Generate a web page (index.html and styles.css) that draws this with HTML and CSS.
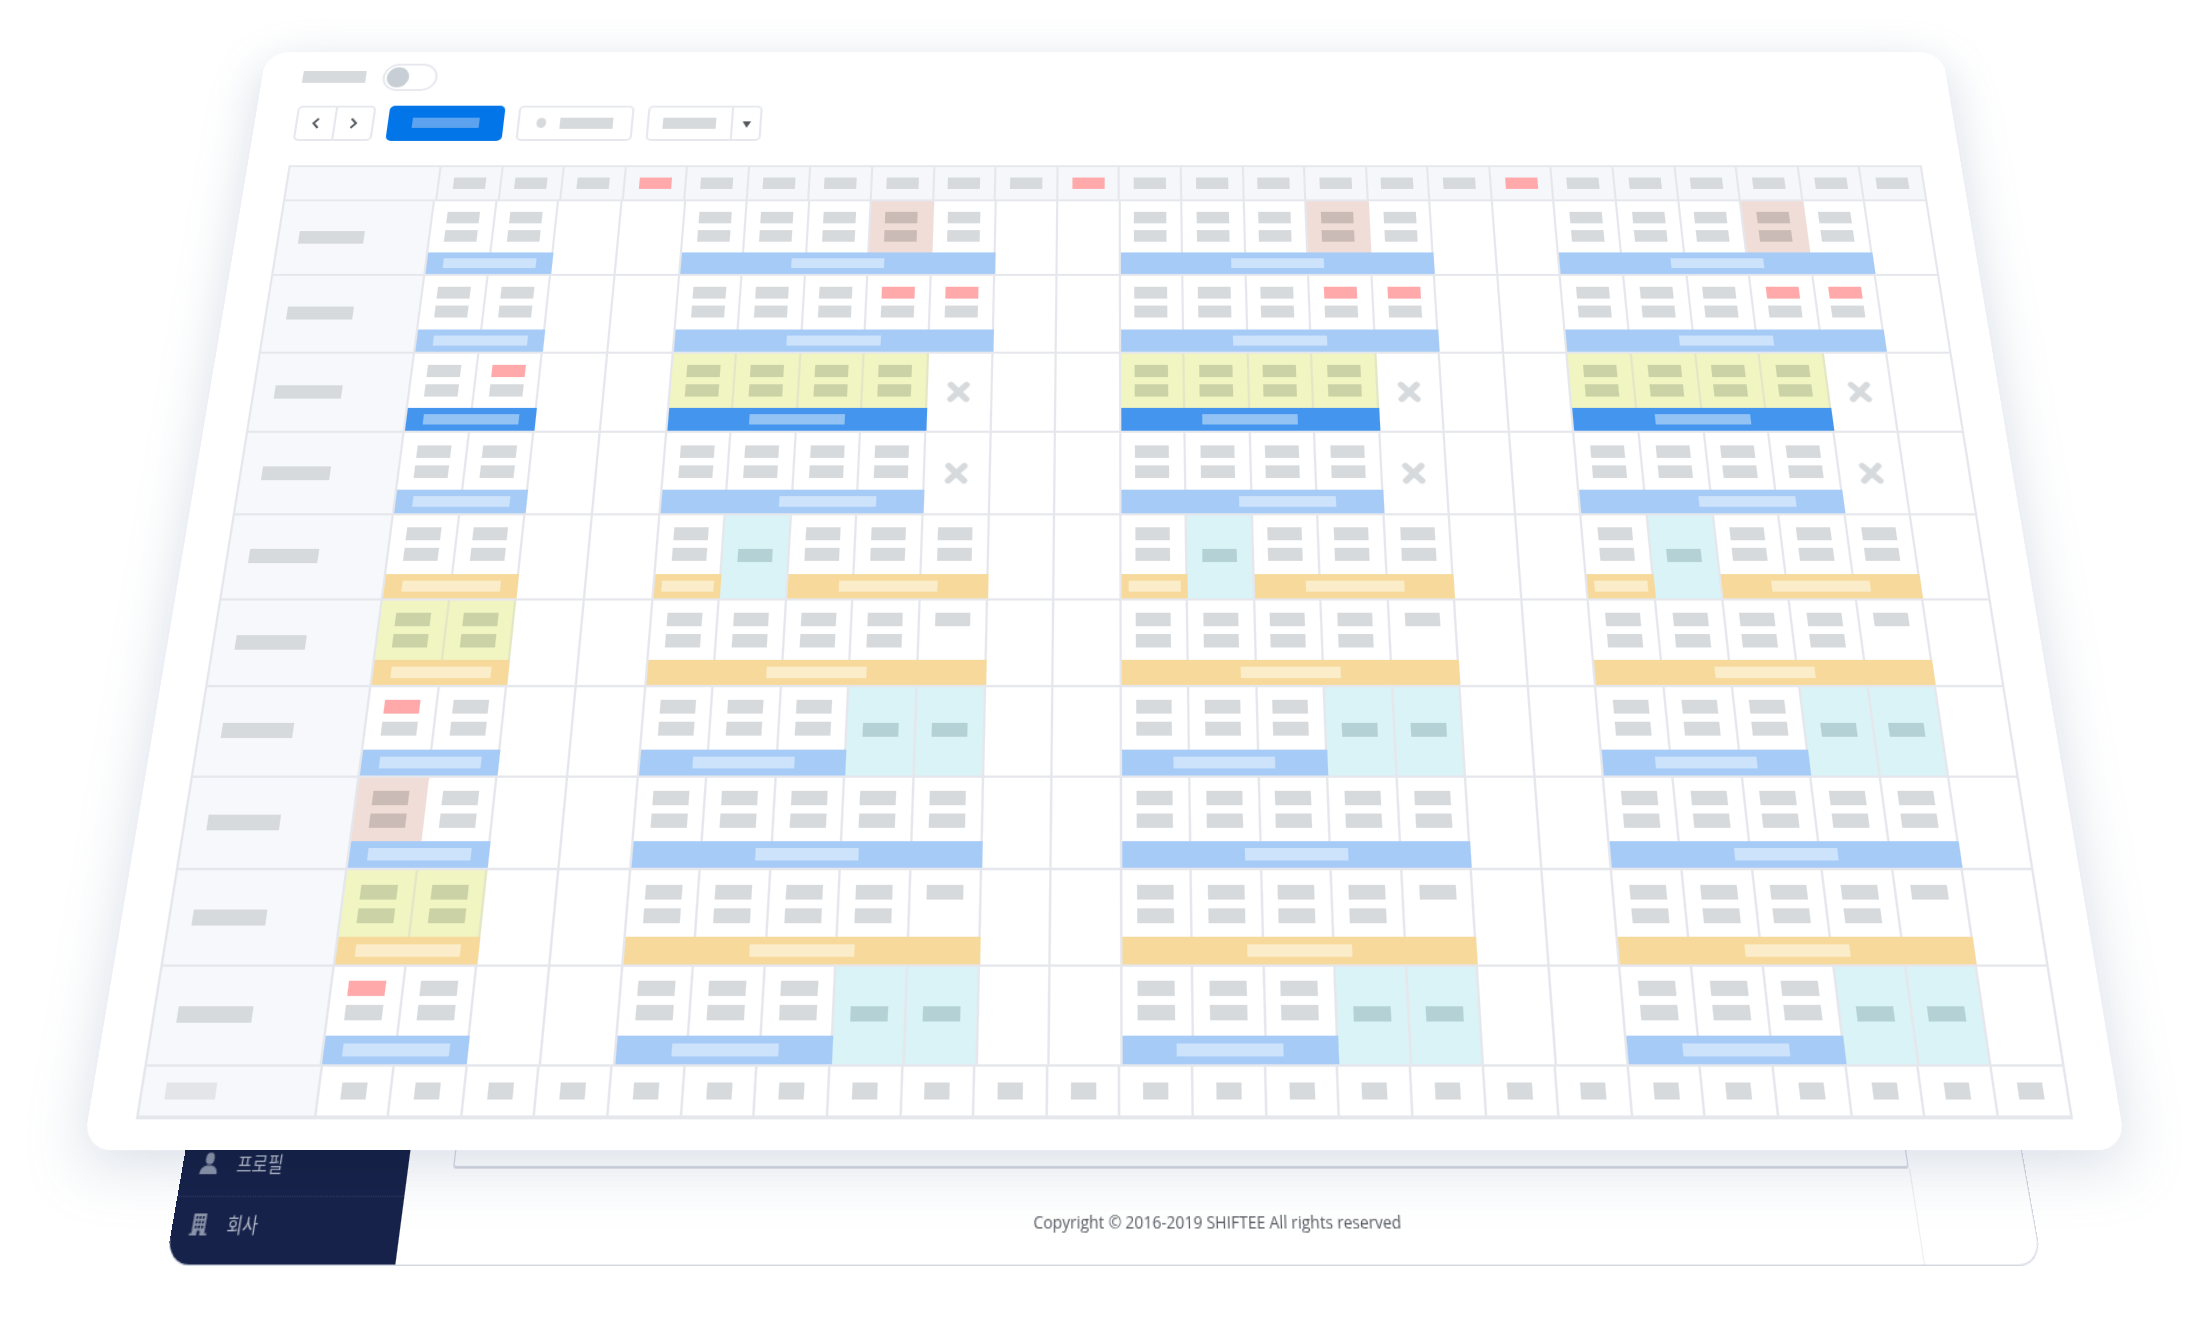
FILE: index.html
```html
<!DOCTYPE html>
<html lang="ko">
<head>
<meta charset="utf-8">
<title>SHIFTEE</title>
<link rel="stylesheet" href="styles.css">
</head>
<body>
<div class="stage">

    <!-- page behind the card, only the bottom strip shows -->
    <div class="sheet">
        <div class="side">
            <div class="menu">
                <svg class="menu-icon" viewBox="0 0 16 16"><ellipse cx="8" cy="4.4" rx="3.7" ry="4.3"/><path d="M.5 16C.5 11.2 4 9.6 8 9.6s7.5 1.6 7.5 6.4z"/></svg>
                <span>프로필</span>
            </div>
            <div class="menu">
                <svg class="menu-icon" viewBox="0 0 16 16"><path d="M2.5 0h11v14.500h2V16H.5v-1.500h2z"/><path class="win" d="M4.500 2h1.800v1.800H4.500zM7.200 2H9v1.800H7.200zM9.900 2h1.800v1.800H9.900zM4.500 5.500h1.800v1.800H4.500zM7.200 5.500H9v1.800H7.200zM9.900 5.500h1.800v1.800H9.900zM4.500 9h1.800v1.800H4.500zM7.200 9H9v1.800H7.200zM9.900 9h1.800v1.800H9.900zM6.800 12.500h2.600V16H6.800z"/></svg>
                <span>회사</span>
            </div>
        </div>
        <div class="page">
            <div class="page-box"></div>
            <div class="copyright">Copyright © 2016-2019 SHIFTEE All rights reserved</div>
        </div>
    </div>

    <!-- card plate: shadow and white sheet, content sits on top -->
    <div class="plate shade"></div>
    <div class="plate"></div>

    <!-- the schedule card -->
    <div class="card">
        <div class="toggle-row">
            <i class="ph wide"></i>
            <div class="toggle"><b></b></div>
        </div>
        <div class="tools">
            <div class="btn nav">
                <span><svg viewBox="0 0 10 14"><path d="M7.500 2L3 7l4.500 5"/></svg></span>
                <span><svg viewBox="0 0 10 14"><path d="M2.500 2L7 7l-4.500 5"/></svg></span>
            </div>
            <div class="btn primary"><i></i></div>
            <div class="btn plain"><b></b><i class="ph mid"></i></div>
            <div class="btn select"><span class="select-text"><i class="ph mid"></i></span><span class="caret"><b></b></span></div>
        </div>

        <div class="table">
            <div class="row head">
                <div class="name"></div>
                <div class="date"><i class="ph"></i></div><div class="date"><i class="ph"></i></div><div class="date"><i class="ph"></i></div><div class="date"><i class="ph red"></i></div>
                <div class="date"><i class="ph"></i></div><div class="date"><i class="ph"></i></div><div class="date"><i class="ph"></i></div><div class="date"><i class="ph"></i></div>
                <div class="date"><i class="ph"></i></div><div class="date"><i class="ph"></i></div><div class="date"><i class="ph red"></i></div><div class="date"><i class="ph"></i></div>
                <div class="date"><i class="ph"></i></div><div class="date"><i class="ph"></i></div><div class="date"><i class="ph"></i></div><div class="date"><i class="ph"></i></div>
                <div class="date"><i class="ph"></i></div><div class="date"><i class="ph red"></i></div><div class="date"><i class="ph"></i></div><div class="date"><i class="ph"></i></div>
                <div class="date"><i class="ph"></i></div><div class="date"><i class="ph"></i></div><div class="date"><i class="ph"></i></div><div class="date"><i class="ph"></i></div>
            </div>

            <!-- row 1 -->
            <div class="row">
                <div class="name"><i class="ph wide"></i></div>
                <div class="shift span-2"><div class="days"><div class="day"><i class="ph"></i><i class="ph"></i></div><div class="day"><i class="ph"></i><i class="ph"></i></div></div><div class="bar"><i></i></div></div>
                <div class="off"></div><div class="off"></div>
                <div class="shift span-5"><div class="days"><div class="day"><i class="ph"></i><i class="ph"></i></div><div class="day"><i class="ph"></i><i class="ph"></i></div><div class="day"><i class="ph"></i><i class="ph"></i></div><div class="day pink"><i class="ph"></i><i class="ph"></i></div><div class="day"><i class="ph"></i><i class="ph"></i></div></div><div class="bar"><i></i></div></div>
                <div class="off"></div><div class="off"></div>
                <div class="shift span-5"><div class="days"><div class="day"><i class="ph"></i><i class="ph"></i></div><div class="day"><i class="ph"></i><i class="ph"></i></div><div class="day"><i class="ph"></i><i class="ph"></i></div><div class="day pink"><i class="ph"></i><i class="ph"></i></div><div class="day"><i class="ph"></i><i class="ph"></i></div></div><div class="bar"><i></i></div></div>
                <div class="off"></div><div class="off"></div>
                <div class="shift span-5"><div class="days"><div class="day"><i class="ph"></i><i class="ph"></i></div><div class="day"><i class="ph"></i><i class="ph"></i></div><div class="day"><i class="ph"></i><i class="ph"></i></div><div class="day pink"><i class="ph"></i><i class="ph"></i></div><div class="day"><i class="ph"></i><i class="ph"></i></div></div><div class="bar"><i></i></div></div>
                <div class="off"></div>
            </div>

            <!-- row 2 -->
            <div class="row">
                <div class="name"><i class="ph wide"></i></div>
                <div class="shift span-2"><div class="days"><div class="day"><i class="ph"></i><i class="ph"></i></div><div class="day"><i class="ph"></i><i class="ph"></i></div></div><div class="bar"><i></i></div></div>
                <div class="off"></div><div class="off"></div>
                <div class="shift span-5"><div class="days"><div class="day"><i class="ph"></i><i class="ph"></i></div><div class="day"><i class="ph"></i><i class="ph"></i></div><div class="day"><i class="ph"></i><i class="ph"></i></div><div class="day"><i class="ph red"></i><i class="ph"></i></div><div class="day"><i class="ph red"></i><i class="ph"></i></div></div><div class="bar"><i></i></div></div>
                <div class="off"></div><div class="off"></div>
                <div class="shift span-5"><div class="days"><div class="day"><i class="ph"></i><i class="ph"></i></div><div class="day"><i class="ph"></i><i class="ph"></i></div><div class="day"><i class="ph"></i><i class="ph"></i></div><div class="day"><i class="ph red"></i><i class="ph"></i></div><div class="day"><i class="ph red"></i><i class="ph"></i></div></div><div class="bar"><i></i></div></div>
                <div class="off"></div><div class="off"></div>
                <div class="shift span-5"><div class="days"><div class="day"><i class="ph"></i><i class="ph"></i></div><div class="day"><i class="ph"></i><i class="ph"></i></div><div class="day"><i class="ph"></i><i class="ph"></i></div><div class="day"><i class="ph red"></i><i class="ph"></i></div><div class="day"><i class="ph red"></i><i class="ph"></i></div></div><div class="bar"><i></i></div></div>
                <div class="off"></div>
            </div>

            <!-- row 3 -->
            <div class="row">
                <div class="name"><i class="ph wide"></i></div>
                <div class="shift span-2"><div class="days"><div class="day"><i class="ph"></i><i class="ph"></i></div><div class="day"><i class="ph red"></i><i class="ph"></i></div></div><div class="bar dark"><i></i></div></div>
                <div class="off"></div><div class="off"></div>
                <div class="shift span-4"><div class="days"><div class="day yellow"><i class="ph"></i><i class="ph"></i></div><div class="day yellow"><i class="ph"></i><i class="ph"></i></div><div class="day yellow"><i class="ph"></i><i class="ph"></i></div><div class="day yellow"><i class="ph"></i><i class="ph"></i></div></div><div class="bar dark"><i></i></div></div>
                <div class="off"><svg class="cross" viewBox="0 0 18 18"><path d="M3 3l12 12M15 3L3 15"/></svg></div>
                <div class="off"></div><div class="off"></div>
                <div class="shift span-4"><div class="days"><div class="day yellow"><i class="ph"></i><i class="ph"></i></div><div class="day yellow"><i class="ph"></i><i class="ph"></i></div><div class="day yellow"><i class="ph"></i><i class="ph"></i></div><div class="day yellow"><i class="ph"></i><i class="ph"></i></div></div><div class="bar dark"><i></i></div></div>
                <div class="off"><svg class="cross" viewBox="0 0 18 18"><path d="M3 3l12 12M15 3L3 15"/></svg></div>
                <div class="off"></div><div class="off"></div>
                <div class="shift span-4"><div class="days"><div class="day yellow"><i class="ph"></i><i class="ph"></i></div><div class="day yellow"><i class="ph"></i><i class="ph"></i></div><div class="day yellow"><i class="ph"></i><i class="ph"></i></div><div class="day yellow"><i class="ph"></i><i class="ph"></i></div></div><div class="bar dark"><i></i></div></div>
                <div class="off"><svg class="cross" viewBox="0 0 18 18"><path d="M3 3l12 12M15 3L3 15"/></svg></div>
                <div class="off"></div>
            </div>

            <!-- row 4 -->
            <div class="row">
                <div class="name"><i class="ph wide"></i></div>
                <div class="shift span-2"><div class="days"><div class="day"><i class="ph"></i><i class="ph"></i></div><div class="day"><i class="ph"></i><i class="ph"></i></div></div><div class="bar"><i></i></div></div>
                <div class="off"></div><div class="off"></div>
                <div class="shift span-4"><div class="days"><div class="day"><i class="ph"></i><i class="ph"></i></div><div class="day"><i class="ph"></i><i class="ph"></i></div><div class="day"><i class="ph"></i><i class="ph"></i></div><div class="day"><i class="ph"></i><i class="ph"></i></div></div><div class="bar nudge"><i></i></div></div>
                <div class="off"><svg class="cross" viewBox="0 0 18 18"><path d="M3 3l12 12M15 3L3 15"/></svg></div>
                <div class="off"></div><div class="off"></div>
                <div class="shift span-4"><div class="days"><div class="day"><i class="ph"></i><i class="ph"></i></div><div class="day"><i class="ph"></i><i class="ph"></i></div><div class="day"><i class="ph"></i><i class="ph"></i></div><div class="day"><i class="ph"></i><i class="ph"></i></div></div><div class="bar nudge"><i></i></div></div>
                <div class="off"><svg class="cross" viewBox="0 0 18 18"><path d="M3 3l12 12M15 3L3 15"/></svg></div>
                <div class="off"></div><div class="off"></div>
                <div class="shift span-4"><div class="days"><div class="day"><i class="ph"></i><i class="ph"></i></div><div class="day"><i class="ph"></i><i class="ph"></i></div><div class="day"><i class="ph"></i><i class="ph"></i></div><div class="day"><i class="ph"></i><i class="ph"></i></div></div><div class="bar nudge"><i></i></div></div>
                <div class="off"><svg class="cross" viewBox="0 0 18 18"><path d="M3 3l12 12M15 3L3 15"/></svg></div>
                <div class="off"></div>
            </div>

            <!-- row 5 -->
            <div class="row">
                <div class="name"><i class="ph wide"></i></div>
                <div class="shift span-2"><div class="days"><div class="day"><i class="ph"></i><i class="ph"></i></div><div class="day"><i class="ph"></i><i class="ph"></i></div></div><div class="bar orange"><i></i></div></div>
                <div class="off"></div><div class="off"></div>
                <div class="shift span-1"><div class="days"><div class="day"><i class="ph"></i><i class="ph"></i></div></div><div class="bar orange"><i></i></div></div>
                <div class="rest"><i class="ph"></i></div>
                <div class="shift span-3"><div class="days"><div class="day"><i class="ph"></i><i class="ph"></i></div><div class="day"><i class="ph"></i><i class="ph"></i></div><div class="day"><i class="ph"></i><i class="ph"></i></div></div><div class="bar orange"><i></i></div></div>
                <div class="off"></div><div class="off"></div>
                <div class="shift span-1"><div class="days"><div class="day"><i class="ph"></i><i class="ph"></i></div></div><div class="bar orange"><i></i></div></div>
                <div class="rest"><i class="ph"></i></div>
                <div class="shift span-3"><div class="days"><div class="day"><i class="ph"></i><i class="ph"></i></div><div class="day"><i class="ph"></i><i class="ph"></i></div><div class="day"><i class="ph"></i><i class="ph"></i></div></div><div class="bar orange"><i></i></div></div>
                <div class="off"></div><div class="off"></div>
                <div class="shift span-1"><div class="days"><div class="day"><i class="ph"></i><i class="ph"></i></div></div><div class="bar orange"><i></i></div></div>
                <div class="rest"><i class="ph"></i></div>
                <div class="shift span-3"><div class="days"><div class="day"><i class="ph"></i><i class="ph"></i></div><div class="day"><i class="ph"></i><i class="ph"></i></div><div class="day"><i class="ph"></i><i class="ph"></i></div></div><div class="bar orange"><i></i></div></div>
                <div class="off"></div>
            </div>

            <!-- row 6 -->
            <div class="row">
                <div class="name"><i class="ph wide"></i></div>
                <div class="shift span-2"><div class="days"><div class="day yellow"><i class="ph"></i><i class="ph"></i></div><div class="day yellow"><i class="ph"></i><i class="ph"></i></div></div><div class="bar orange"><i></i></div></div>
                <div class="off"></div><div class="off"></div>
                <div class="shift span-5"><div class="days"><div class="day"><i class="ph"></i><i class="ph"></i></div><div class="day"><i class="ph"></i><i class="ph"></i></div><div class="day"><i class="ph"></i><i class="ph"></i></div><div class="day"><i class="ph"></i><i class="ph"></i></div><div class="day one"><i class="ph"></i></div></div><div class="bar orange"><i></i></div></div>
                <div class="off"></div><div class="off"></div>
                <div class="shift span-5"><div class="days"><div class="day"><i class="ph"></i><i class="ph"></i></div><div class="day"><i class="ph"></i><i class="ph"></i></div><div class="day"><i class="ph"></i><i class="ph"></i></div><div class="day"><i class="ph"></i><i class="ph"></i></div><div class="day one"><i class="ph"></i></div></div><div class="bar orange"><i></i></div></div>
                <div class="off"></div><div class="off"></div>
                <div class="shift span-5"><div class="days"><div class="day"><i class="ph"></i><i class="ph"></i></div><div class="day"><i class="ph"></i><i class="ph"></i></div><div class="day"><i class="ph"></i><i class="ph"></i></div><div class="day"><i class="ph"></i><i class="ph"></i></div><div class="day one"><i class="ph"></i></div></div><div class="bar orange"><i></i></div></div>
                <div class="off"></div>
            </div>

            <!-- row 7 -->
            <div class="row">
                <div class="name"><i class="ph wide"></i></div>
                <div class="shift span-2"><div class="days"><div class="day"><i class="ph red"></i><i class="ph"></i></div><div class="day"><i class="ph"></i><i class="ph"></i></div></div><div class="bar"><i></i></div></div>
                <div class="off"></div><div class="off"></div>
                <div class="shift span-3"><div class="days"><div class="day"><i class="ph"></i><i class="ph"></i></div><div class="day"><i class="ph"></i><i class="ph"></i></div><div class="day"><i class="ph"></i><i class="ph"></i></div></div><div class="bar"><i></i></div></div>
                <div class="rest"><i class="ph"></i></div><div class="rest"><i class="ph"></i></div>
                <div class="off"></div><div class="off"></div>
                <div class="shift span-3"><div class="days"><div class="day"><i class="ph"></i><i class="ph"></i></div><div class="day"><i class="ph"></i><i class="ph"></i></div><div class="day"><i class="ph"></i><i class="ph"></i></div></div><div class="bar"><i></i></div></div>
                <div class="rest"><i class="ph"></i></div><div class="rest"><i class="ph"></i></div>
                <div class="off"></div><div class="off"></div>
                <div class="shift span-3"><div class="days"><div class="day"><i class="ph"></i><i class="ph"></i></div><div class="day"><i class="ph"></i><i class="ph"></i></div><div class="day"><i class="ph"></i><i class="ph"></i></div></div><div class="bar"><i></i></div></div>
                <div class="rest"><i class="ph"></i></div><div class="rest"><i class="ph"></i></div>
                <div class="off"></div>
            </div>

            <!-- row 8 -->
            <div class="row">
                <div class="name"><i class="ph wide"></i></div>
                <div class="shift span-2"><div class="days"><div class="day pink"><i class="ph"></i><i class="ph"></i></div><div class="day"><i class="ph"></i><i class="ph"></i></div></div><div class="bar"><i></i></div></div>
                <div class="off"></div><div class="off"></div>
                <div class="shift span-5"><div class="days"><div class="day"><i class="ph"></i><i class="ph"></i></div><div class="day"><i class="ph"></i><i class="ph"></i></div><div class="day"><i class="ph"></i><i class="ph"></i></div><div class="day"><i class="ph"></i><i class="ph"></i></div><div class="day"><i class="ph"></i><i class="ph"></i></div></div><div class="bar"><i></i></div></div>
                <div class="off"></div><div class="off"></div>
                <div class="shift span-5"><div class="days"><div class="day"><i class="ph"></i><i class="ph"></i></div><div class="day"><i class="ph"></i><i class="ph"></i></div><div class="day"><i class="ph"></i><i class="ph"></i></div><div class="day"><i class="ph"></i><i class="ph"></i></div><div class="day"><i class="ph"></i><i class="ph"></i></div></div><div class="bar"><i></i></div></div>
                <div class="off"></div><div class="off"></div>
                <div class="shift span-5"><div class="days"><div class="day"><i class="ph"></i><i class="ph"></i></div><div class="day"><i class="ph"></i><i class="ph"></i></div><div class="day"><i class="ph"></i><i class="ph"></i></div><div class="day"><i class="ph"></i><i class="ph"></i></div><div class="day"><i class="ph"></i><i class="ph"></i></div></div><div class="bar"><i></i></div></div>
                <div class="off"></div>
            </div>

            <!-- row 9 -->
            <div class="row">
                <div class="name"><i class="ph wide"></i></div>
                <div class="shift span-2"><div class="days"><div class="day yellow"><i class="ph"></i><i class="ph"></i></div><div class="day yellow"><i class="ph"></i><i class="ph"></i></div></div><div class="bar orange"><i></i></div></div>
                <div class="off"></div><div class="off"></div>
                <div class="shift span-5"><div class="days"><div class="day"><i class="ph"></i><i class="ph"></i></div><div class="day"><i class="ph"></i><i class="ph"></i></div><div class="day"><i class="ph"></i><i class="ph"></i></div><div class="day"><i class="ph"></i><i class="ph"></i></div><div class="day one"><i class="ph"></i></div></div><div class="bar orange"><i></i></div></div>
                <div class="off"></div><div class="off"></div>
                <div class="shift span-5"><div class="days"><div class="day"><i class="ph"></i><i class="ph"></i></div><div class="day"><i class="ph"></i><i class="ph"></i></div><div class="day"><i class="ph"></i><i class="ph"></i></div><div class="day"><i class="ph"></i><i class="ph"></i></div><div class="day one"><i class="ph"></i></div></div><div class="bar orange"><i></i></div></div>
                <div class="off"></div><div class="off"></div>
                <div class="shift span-5"><div class="days"><div class="day"><i class="ph"></i><i class="ph"></i></div><div class="day"><i class="ph"></i><i class="ph"></i></div><div class="day"><i class="ph"></i><i class="ph"></i></div><div class="day"><i class="ph"></i><i class="ph"></i></div><div class="day one"><i class="ph"></i></div></div><div class="bar orange"><i></i></div></div>
                <div class="off"></div>
            </div>

            <!-- row 10 -->
            <div class="row">
                <div class="name"><i class="ph wide"></i></div>
                <div class="shift span-2"><div class="days"><div class="day"><i class="ph red"></i><i class="ph"></i></div><div class="day"><i class="ph"></i><i class="ph"></i></div></div><div class="bar"><i></i></div></div>
                <div class="off"></div><div class="off"></div>
                <div class="shift span-3"><div class="days"><div class="day"><i class="ph"></i><i class="ph"></i></div><div class="day"><i class="ph"></i><i class="ph"></i></div><div class="day"><i class="ph"></i><i class="ph"></i></div></div><div class="bar"><i></i></div></div>
                <div class="rest"><i class="ph"></i></div><div class="rest"><i class="ph"></i></div>
                <div class="off"></div><div class="off"></div>
                <div class="shift span-3"><div class="days"><div class="day"><i class="ph"></i><i class="ph"></i></div><div class="day"><i class="ph"></i><i class="ph"></i></div><div class="day"><i class="ph"></i><i class="ph"></i></div></div><div class="bar"><i></i></div></div>
                <div class="rest"><i class="ph"></i></div><div class="rest"><i class="ph"></i></div>
                <div class="off"></div><div class="off"></div>
                <div class="shift span-3"><div class="days"><div class="day"><i class="ph"></i><i class="ph"></i></div><div class="day"><i class="ph"></i><i class="ph"></i></div><div class="day"><i class="ph"></i><i class="ph"></i></div></div><div class="bar"><i></i></div></div>
                <div class="rest"><i class="ph"></i></div><div class="rest"><i class="ph"></i></div>
                <div class="off"></div>
            </div>

            <!-- totals -->
            <div class="row foot">
                <div class="name"><i class="ph total"></i></div>
                <div class="sum"><i class="ph"></i></div><div class="sum"><i class="ph"></i></div><div class="sum"><i class="ph"></i></div><div class="sum"><i class="ph"></i></div>
                <div class="sum"><i class="ph"></i></div><div class="sum"><i class="ph"></i></div><div class="sum"><i class="ph"></i></div><div class="sum"><i class="ph"></i></div>
                <div class="sum"><i class="ph"></i></div><div class="sum"><i class="ph"></i></div><div class="sum"><i class="ph"></i></div><div class="sum"><i class="ph"></i></div>
                <div class="sum"><i class="ph"></i></div><div class="sum"><i class="ph"></i></div><div class="sum"><i class="ph"></i></div><div class="sum"><i class="ph"></i></div>
                <div class="sum"><i class="ph"></i></div><div class="sum"><i class="ph"></i></div><div class="sum"><i class="ph"></i></div><div class="sum"><i class="ph"></i></div>
                <div class="sum"><i class="ph"></i></div><div class="sum"><i class="ph"></i></div><div class="sum"><i class="ph"></i></div><div class="sum"><i class="ph"></i></div>
            </div>
        </div>
    </div>
</div>
</body>
</html>
```

FILE: styles.css
```css
html, body {
    margin: 0;
    padding: 0;
    background: #fff;
}
.stage {
    position: relative;
    width: 2208px;
    height: 1320px;
    overflow: hidden;
}

/* page behind the card */
.sheet {
    position: absolute;
    left: 0;
    top: 0;
    width: 1600px;
    height: 100px;
    display: flex;
    box-sizing: border-box;
    background: #fff;
    border: solid #d3d7e0;
    border-width: 0 1px 1px 0;
    border-radius: 0 0 20px 20px;
    transform-origin: 0 0;
    transform: matrix3d(1.14338,0,0,0, -.2802,1.036,0,-.0002557, 0,0,1,0, 189,1130,0,1);
}
.side {
    width: 196px;
    flex: none;
    box-sizing: border-box;
    padding-bottom: 5.4px;
    display: flex;
    flex-direction: column;
    justify-content: flex-end;
    background: #16224a;
    border-radius: 0 0 0 20px;
}
.menu {
    height: 44.5px;
    flex: none;
    display: flex;
    align-items: center;
    gap: 16px;
    padding: 0 0 4px 15px;
    box-sizing: border-box;
    color: #b4bac9;
    font: 14.5px "Noto Sans CJK KR", "Noto Sans", sans-serif;
}
.menu + .menu {
    border-top: 1px dotted #2c3860;
}
.menu-icon {
    width: 16px;
    height: 16px;
    flex: none;
    fill: #8b94a9;
}
.menu-icon .win {
    fill: #16224a;
}
.page {
    flex: 1;
    position: relative;
    display: flex;
    flex-direction: column;
}
.page-box {
    width: 1264px;
    height: 29px;
    margin-left: 38.5px;
    box-sizing: border-box;
    border: solid #d3d7e0;
    border-width: 0 1px 2px 1px;
    border-radius: 0 0 3px 3px;
    flex: none;
}
.page::after {
    content: "";
    position: absolute;
    left: 1302.5px;
    top: 29px;
    bottom: 0;
    width: 1px;
    background: #eceef2;
}
.copyright {
    margin-top: 28px;
    text-align: center;
    color: #555a60;
    font: 13.5px/22px "Open Sans", sans-serif;
}

/* white plate under the card content */
.plate {
    position: absolute;
    left: 0;
    top: 0;
    width: 1600px;
    height: 1000px;
    background: #fff;
    border-radius: 22px;
    transform-origin: 0 0;
    transform: matrix3d(1.04713,0,0,0, -.19853,.89108,0,-.00017993, 0,0,1,0, 266.6,52,0,1);
}
.plate.shade {
    background: transparent;
    box-shadow: 0 10px 46px rgba(125, 145, 175, .3);
    mix-blend-mode: multiply;
}

/* the card */
.card {
    position: absolute;
    left: 0;
    top: 0;
    width: 1600px;
    height: 1000px;
    box-sizing: border-box;
    padding: 12.5px 37px 0 39px;
    transform-origin: 0 0;
    transform: matrix3d(1.04719,0,0,0, -.19957,.89114,0,-.00017988, 0,0,1,0, 266,52,0,1);
}
.toggle-row {
    display: flex;
    align-items: center;
    gap: 16px;
    height: 30px;
}
.toggle {
    width: 52px;
    height: 30px;
    box-sizing: border-box;
    border: 2px solid #e6e8ee;
    border-radius: 15px;
    padding: 2px;
}
.toggle b {
    display: block;
    width: 21px;
    height: 22px;
    border-radius: 50%;
    background: #c8ced5;
}
.ph {
    display: block;
    width: 30px;
    height: 12px;
    flex: none;
    background: #d7dadd;
}
.ph.wide {
    width: 60px;
    height: 13px;
}
.ph.mid {
    width: 50px;
}
.ph.red {
    background: #ffa9ab;
}
.ph.total {
    width: 40px;
    height: 13px;
    background: #e3e5e8;
}

/* toolbar */
.tools {
    display: flex;
    gap: 13px;
    margin-top: 16px;
    height: 38.5px;
}
.btn {
    box-sizing: border-box;
    border: 2px solid #e6e8ee;
    border-radius: 5px;
    display: flex;
    align-items: center;
    justify-content: center;
}
.nav {
    width: 74px;
    justify-content: stretch;
}
.nav span {
    flex: 1;
    height: 100%;
    display: flex;
    align-items: center;
    justify-content: center;
}
.nav span + span {
    border-left: 2px solid #e6e8ee;
}
.nav svg {
    width: 10px;
    height: 14px;
    fill: none;
    stroke: #55585c;
    stroke-width: 2;
}
.primary {
    width: 109px;
    background: #0275e8;
    border-color: #0275e8;
}
.primary i {
    display: block;
    width: 63px;
    height: 11px;
    background: #5ca2ee;
}
.plain {
    width: 108.5px;
    gap: 13px;
}
.plain b {
    width: 9px;
    height: 11px;
    border-radius: 50%;
    background: #d7dadd;
}
.select {
    width: 108.5px;
    justify-content: stretch;
}
.select-text {
    flex: 1;
    height: 100%;
    display: flex;
    align-items: center;
    justify-content: center;
}
.caret {
    width: 25px;
    height: 100%;
    border-left: 2px solid #e6e8ee;
    display: flex;
    align-items: center;
    justify-content: center;
}
.caret b {
    margin-top: 3px;
    border: solid transparent;
    border-width: 7px 4.500px 0;
    border-top-color: #55585c;
}

/* schedule table */
.table {
    margin-top: 25.6px;
    width: 1525px;
    box-sizing: border-box;
    border: solid #e5e7ec;
    border-width: 2px 2px 3px 2px;
}
/* the body rows do not quite line up with the header in the reference */
.row {
    display: grid;
    grid-template-columns: 139.4px 57.55px 57.55px 58.65px 58.65px repeat(19, 57.55px) minmax(0, 1fr);
    height: 77.6px;
    box-sizing: border-box;
    border-bottom: 2px solid #e5e7ec;
}
.row.head {
    grid-template-columns: 141px repeat(23, 57.58px) minmax(0, 1fr);
    height: 36px;
    background: #f5f7fa;
}
.row.foot {
    grid-template-columns: 139.6px repeat(23, 57.64px) minmax(0, 1fr);
    height: 37px;
    border-bottom: 0;
}
.name {
    display: flex;
    align-items: center;
    padding-left: 18px;
    background: #f6f8fb;
    border-right: 2px solid #e5e7ec;
}
.date, .sum, .off, .rest {
    display: flex;
    align-items: center;
    justify-content: center;
    border-right: 2px solid #e5e7ec;
}
.date:last-child, .sum:last-child, .off:last-child {
    border-right: 0;
}
.sum .ph {
    width: 20px;
    height: 13px;
}
.rest {
    padding-bottom: 2px;
    background: #d9f3f6;
}
.rest .ph {
    background: #b4d2d6;
}
.cross {
    width: 21px;
    height: 23px;
    fill: none;
    stroke: #d7dadd;
    stroke-width: 5;
    stroke-linecap: round;
}

.shift {
    display: flex;
    flex-direction: column;
    min-width: 0;
}
.span-1 { grid-column: span 1; }
.span-2 { grid-column: span 2; }
.span-3 { grid-column: span 3; }
.span-4 { grid-column: span 4; }
.span-5 { grid-column: span 5; }
.days {
    flex: 1;
    display: flex;
}
.day {
    flex: 1;
    min-width: 0;
    display: flex;
    flex-direction: column;
    align-items: center;
    justify-content: center;
    gap: 7px;
    border-right: 2px solid #e5e7ec;
}
.day.one {
    justify-content: flex-start;
    padding-top: 11.3px;
}
.day.yellow {
    background: #f0f5c2;
    border-right-color: #e3e7c6;
}
.day.yellow .ph {
    background: #cbd3a6;
}
.day.pink {
    background: #f0ddd8;
    border-right-color: #f0ddd8;
}
.day.pink .ph {
    background: #cbbbb7;
}
.bar {
    height: 22px;
    flex: none;
    box-sizing: border-box;
    padding: 0 6px;
    display: flex;
    align-items: center;
    justify-content: center;
    background: #a6cbf7;
}
.bar i {
    display: block;
    width: 85px;
    height: 10px;
    background: #cde2fb;
}
.bar.nudge i {
    margin-left: 62px;
}
.bar.dark {
    background: #4395ee;
}
.bar.dark i {
    background: #93c2f5;
}
.bar.orange {
    background: #f6d99b;
}
.bar.orange i {
    background: #fbedc9;
}
```
